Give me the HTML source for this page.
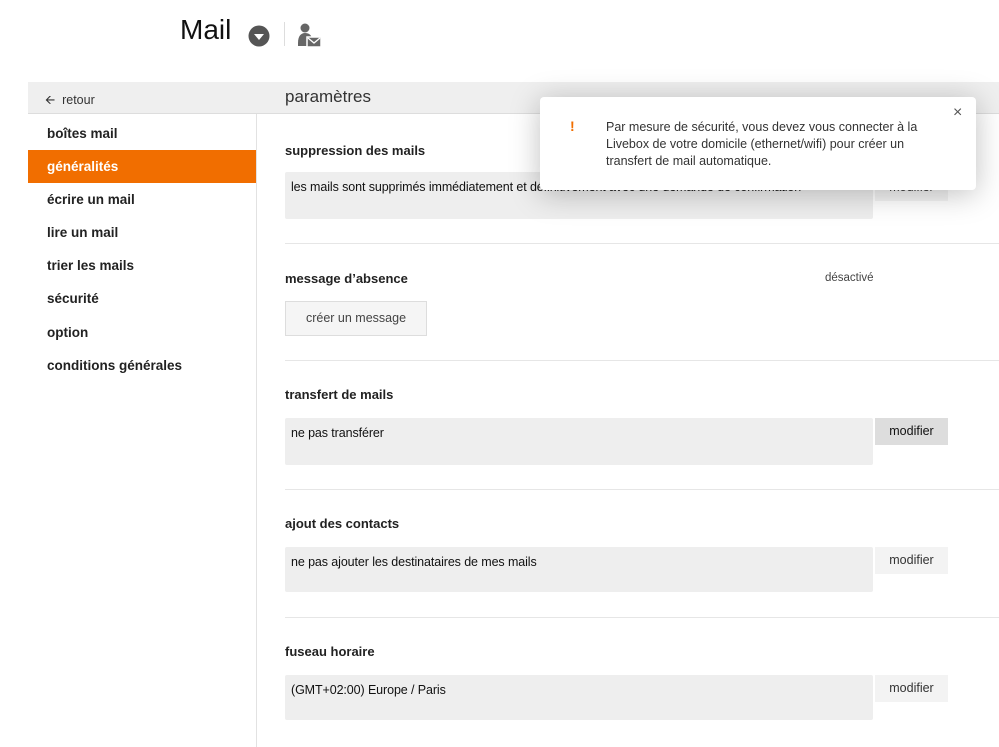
<!DOCTYPE html>
<html><head><meta charset="utf-8"><style>
*{margin:0;padding:0;box-sizing:border-box}
body{width:999px;height:747px;overflow:hidden;background:#fff;font-family:"Liberation Sans",Arial,sans-serif;color:#000;position:relative}
.abs{position:absolute}
.side a{position:absolute;left:28px;width:228px;height:33px;line-height:34px;padding-left:19px;font-size:13.5px;font-weight:bold;color:#222}
.t{position:absolute;left:285px;font-size:13px;font-weight:bold;color:#222}
.box{position:absolute;left:285px;width:588px;background:#eee;border-radius:2px;font-size:12.5px;padding:8px 6px;color:#111;letter-spacing:-0.1px}
.btn{position:absolute;left:875px;width:73px;height:27px;background:#f3f3f3;font-size:12.5px;text-align:center;line-height:26px;color:#333}
.sep{position:absolute;left:285px;right:0;height:1px;background:#e6e6e6}
</style></head><body>
<div class="abs" style="left:180px;top:14px;font-size:28px;color:#111">Mail</div>
<svg class="abs" style="left:248px;top:25px" width="22" height="22"><circle cx="11" cy="11" r="10.5" fill="#555"/><path d="M6 9h10l-5 6z" fill="#fff"/></svg>
<div class="abs" style="left:284px;top:22px;width:1px;height:24px;background:#ddd"></div>
<svg class="abs" style="left:297px;top:23px" width="26" height="26"><circle cx="8" cy="5" r="4.5" fill="#666"/><path d="M1 20c0-7 3-10 7-10s6 2 7 5v8H1z" fill="#666"/><rect x="10" y="14" width="14" height="10" fill="#666" stroke="#fff" stroke-width="1.5"/><path d="M11 15l6 5 6-5" stroke="#fff" fill="none" stroke-width="1.3"/></svg>
<div class="abs" style="left:28px;top:82px;width:971px;height:32px;background:#efefef;border-bottom:1px solid #ddd"></div>
<div class="abs" style="left:45px;top:91px;font-size:12.5px;color:#333">&#129128;&nbsp; retour</div>
<div class="abs" style="left:285px;top:87px;font-size:17px;color:#333">paramètres</div>
<div class="abs" style="left:256px;top:114px;width:1px;height:633px;background:#e2e2e2"></div>
<div class="side">
<a style="top:117px">boîtes mail</a>
<a style="top:150px;background:#f16e00;color:#fff">généralités</a>
<a style="top:183px">écrire un mail</a>
<a style="top:216px">lire un mail</a>
<a style="top:249px">trier les mails</a>
<a style="top:282px">sécurité</a>
<a style="top:316px">option</a>
<a style="top:349px">conditions générales</a>
</div>
<div class="t" style="top:143px">suppression des mails</div>
<div class="box" style="top:172px;height:47px">les mails sont supprimés immédiatement et définitivement avec une demande de confirmation</div>
<div class="btn" style="top:174px">modifier</div>
<div class="sep" style="top:243px"></div>
<div class="t" style="top:271px">message d’absence</div>
<div class="abs" style="left:825px;top:272px;font-size:11.5px;color:#444">désactivé</div>
<div class="abs" style="left:285px;top:301px;width:142px;height:35px;background:#f5f5f5;border:1px solid #ddd;font-size:12.5px;color:#444;text-align:center;line-height:33px">créer un message</div>
<div class="sep" style="top:360px"></div>
<div class="t" style="top:387px">transfert de mails</div>
<div class="box" style="top:418px;height:47px">ne pas transférer</div>
<div class="btn" style="top:418px;background:#ddd;color:#111">modifier</div>
<div class="sep" style="top:489px"></div>
<div class="t" style="top:516px">ajout des contacts</div>
<div class="box" style="top:547px;height:45px">ne pas ajouter les destinataires de mes mails</div>
<div class="btn" style="top:547px">modifier</div>
<div class="sep" style="top:617px"></div>
<div class="t" style="top:644px">fuseau horaire</div>
<div class="box" style="top:675px;height:45px">(GMT+02:00) Europe / Paris</div>
<div class="btn" style="top:675px">modifier</div>
<div class="abs" style="left:540px;top:97px;width:436px;height:93px;background:#fff;border-radius:4px;box-shadow:0 4px 30px rgba(0,0,0,.25)">
<div class="abs" style="left:30px;top:21px;color:#f16e00;font-weight:bold;font-size:14px">!</div>
<div class="abs" style="left:66px;top:22px;width:330px;font-size:12.5px;line-height:17px;color:#333">Par mesure de sécurité, vous devez vous connecter à la Livebox de votre domicile (ethernet/wifi) pour créer un transfert de mail automatique.</div>
<div class="abs" style="left:413px;top:7px;font-size:16px;color:#555">×</div>
</div>
</body></html>
